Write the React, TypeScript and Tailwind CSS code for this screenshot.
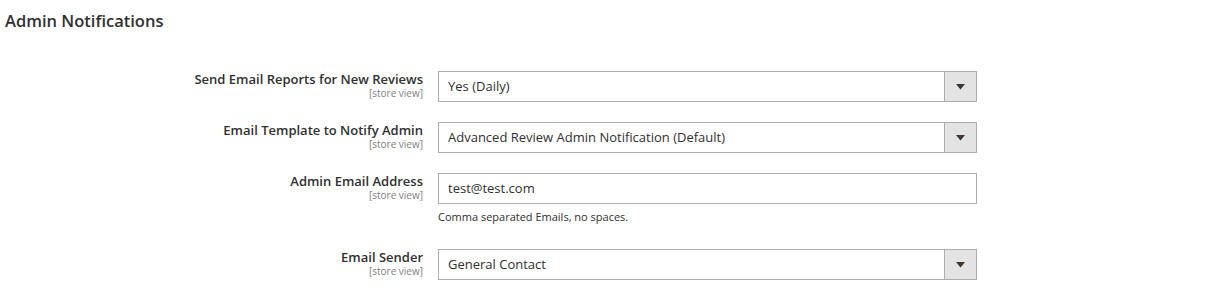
import React from "react";

const font = { fontFamily: '"Open Sans", "Liberation Sans", sans-serif' };

function Arrow() {
  return (
    <div className="flex h-full w-[32px] items-center justify-center border-l border-[#adadad] bg-[#e3e3e3]">
      <svg width="9" height="6" viewBox="0 0 9 6">
        <path d="M0 0 L9 0 L4.5 5.5 Z" fill="#41362f" />
      </svg>
    </div>
  );
}

function Row({
  label,
  value,
  select,
  hint,
}: {
  label: string;
  value: string;
  select?: boolean;
  hint?: string;
}) {
  return (
    <div className="flex">
      <div className="w-[423px] shrink-0 text-right">
        <div className="text-[13px] font-semibold leading-[16px] text-[#303030]">{label}</div>
        <div className="text-[10px] leading-[12px] text-[#808080]">[store view]</div>
      </div>
      <div className="ml-[15px] w-[539px] shrink-0">
        <div className="flex h-[31px] items-center border border-[#adadad] bg-white">
          <div className="flex-1 pl-[9px] pt-[1px] text-[13px] text-[#303030]">{value}</div>
          {select && <Arrow />}
        </div>
        {hint && (
          <div className="mb-[5px] mt-[6px] text-[11px] leading-[14px] text-[#303030]">{hint}</div>
        )}
      </div>
    </div>
  );
}

export default function App() {
  return (
    <div style={font} className="h-[298px] w-[1214px] overflow-hidden bg-white">
      <div className="pl-[5px] pt-[10px] text-[16.5px] font-semibold leading-[22px] text-[#303030]">
        Admin Notifications
      </div>
      <div className="mt-[39px] flex flex-col gap-[20px]">
        <Row label="Send Email Reports for New Reviews" value="Yes (Daily)" select />
        <Row
          label="Email Template to Notify Admin"
          value="Advanced Review Admin Notification (Default)"
          select
        />
        <Row
          label="Admin Email Address"
          value="test@test.com"
          hint="Comma separated Emails, no spaces."
        />
        <Row label="Email Sender" value="General Contact" select />
      </div>
    </div>
  );
}
